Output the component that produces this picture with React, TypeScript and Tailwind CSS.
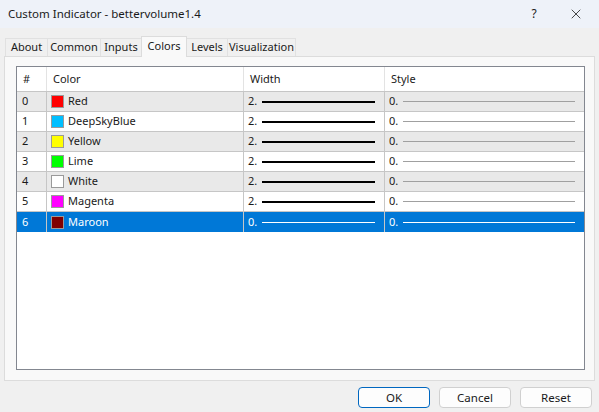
import { X } from 'lucide-react'

const rows = [
  { n: 0, name: 'Red', color: '#ff0000', w: '2.' },
  { n: 1, name: 'DeepSkyBlue', color: '#00bfff', w: '2.' },
  { n: 2, name: 'Yellow', color: '#ffff00', w: '2.' },
  { n: 3, name: 'Lime', color: '#00ff00', w: '2.' },
  { n: 4, name: 'White', color: '#ffffff', w: '2.' },
  { n: 5, name: 'Magenta', color: '#ff00ff', w: '2.' },
  { n: 6, name: 'Maroon', color: '#800000', w: '0.' },
]

const tabs = [
  { label: 'About', w: 'w-[43px]' },
  { label: 'Common', w: 'w-[54px]' },
  { label: 'Inputs', w: 'w-[42px]' },
  { label: 'Colors', w: 'w-[46px]' },
  { label: 'Levels', w: 'w-[42px]' },
  { label: 'Visualization', w: 'w-[69px]' },
]

export default function App() {
  return (
    <div
      className="w-[599px] h-[412px] bg-[#f0f0f0] flex flex-col text-[11px] text-[#1a1a1a] overflow-hidden"
      style={{ fontFamily: '"Noto Sans", "Open Sans", sans-serif' }}
    >
      {/* title bar */}
      <div className="h-[28px] bg-[#eef2f9] flex items-center justify-between pl-[8px]">
        <span className="text-[11.5px]">Custom Indicator - bettervolume1.4</span>
        <div className="flex items-center">
          <span className="text-[12px] w-[46px] text-center -mr-[4px]">?</span>
          <div className="w-[46px] flex justify-center">
            <X size={16} strokeWidth={1.2} />
          </div>
        </div>
      </div>

      {/* tabs */}
      <div className="flex items-end h-[28px] pl-[5px]">
        {tabs.map((t) =>
          t.label === 'Colors' ? (
            <div
              key={t.label}
              className={`${t.w} h-[21px] bg-[#f9f9f9] border border-b-0 border-[#dcdcdc] flex justify-center items-start pt-[1px] -mb-[1px] relative z-10 -ml-[1px]`}
            >
              {t.label}
            </div>
          ) : (
            <div
              key={t.label}
              className={`${t.w} h-[18px] border border-b-0 border-[#e1e1e1] flex justify-center items-center -ml-[1px] first:ml-0`}
            >
              {t.label}
            </div>
          )
        )}
      </div>

      {/* panel */}
      <div className="mx-[4px] w-[591px] h-[325px] bg-[#f9f9f9] border border-[#dcdcdc] pt-[9px] pl-[11px]">
        <div className="w-[569px] h-[304px] bg-white border border-[#838790]">
          <div className="grid grid-cols-[30px_197px_141px_1fr] h-[25px] border-b border-[#c6c6c6]">
            <div className="flex items-center pl-[6px] border-r border-[#e3e3e3]">#</div>
            <div className="flex items-center pl-[6px] border-r border-[#e3e3e3]">Color</div>
            <div className="flex items-center pl-[6px] border-r border-[#e3e3e3]">Width</div>
            <div className="flex items-center pl-[6px]">Style</div>
          </div>
          {rows.map((r) => {
            const sel = r.n === 6
            const bg = sel ? 'bg-[#0078d7] text-white' : r.n % 2 === 0 ? 'bg-[#e9e9e9]' : 'bg-white'
            return (
              <div
                key={r.n}
                className={`grid grid-cols-[30px_197px_141px_1fr] h-[20px] ${sel ? '' : 'border-b border-[#c6c6c6]'} ${bg}`}
              >
                <div className="flex items-center pl-[5px] border-r border-[#c6c6c6]">{r.n}</div>
                <div className="flex items-center pl-[4px] gap-[4px] border-r border-[#c6c6c6]">
                  <span
                    className="w-[13px] h-[13px] border border-[#9a9a9a]"
                    style={{ backgroundColor: r.color }}
                  />
                  <span>{r.name}</span>
                </div>
                <div className="flex items-center pl-[4px] border-r border-[#c6c6c6]">
                  <span className="w-[14px]">{r.w}</span>
                  <span
                    className={`w-[113px] ${sel ? 'h-px bg-white' : 'h-[2px] bg-black'}`}
                  />
                </div>
                <div className="flex items-center pl-[4px]">
                  <span className="w-[14px]">0.</span>
                  <span className={`w-[172px] h-px ${sel ? 'bg-white' : 'bg-[#a0a0a0]'}`} />
                </div>
              </div>
            )
          })}
        </div>
      </div>

      {/* buttons */}
      <div className="flex justify-end gap-[9px] pr-[7px] pt-[6px]">
        <button className="w-[72px] h-[21px] rounded-[4px] border border-[#0067c0] bg-[#fdfdfd] text-[11.5px]">
          OK
        </button>
        <button className="w-[72px] h-[21px] rounded-[4px] border border-[#d0d0d0] bg-[#fdfdfd] text-[11.5px]">
          Cancel
        </button>
        <button className="w-[72px] h-[21px] rounded-[4px] border border-[#d0d0d0] bg-[#fdfdfd] text-[11.5px]">
          Reset
        </button>
      </div>
    </div>
  )
}
